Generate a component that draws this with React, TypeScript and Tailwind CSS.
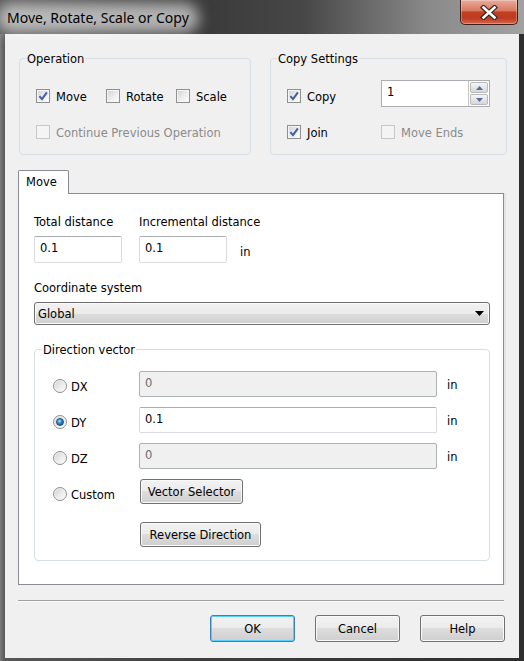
import type { ReactNode } from 'react';

function CheckBox({ checked = false, disabled = false }: { checked?: boolean; disabled?: boolean }) {
  return (
    <span
      className={
        disabled
          ? 'flex h-[14px] w-[14px] shrink-0 border border-[#c8c8c8] bg-[#f4f4f4]'
          : 'flex h-[14px] w-[14px] shrink-0 items-center justify-center border border-[#8f8f8f] bg-[linear-gradient(135deg,#cdd0d4_0%,#eeeeee_55%,#ffffff_100%)] shadow-[inset_0_0_0_1px_#f6f6f6]'
      }
    >
      {checked && (
        <svg width="10" height="10" viewBox="0 0 10 10">
          <path d="M1.4 5.2 L4 8.2 L8.9 1.4" fill="none" stroke="#4460a4" strokeWidth="2" />
        </svg>
      )}
    </span>
  );
}

function CheckItem({
  label,
  checked,
  disabled,
  className = '',
}: {
  label: string;
  checked?: boolean;
  disabled?: boolean;
  className?: string;
}) {
  return (
    <div className={`flex h-[14px] items-center ${className}`}>
      <CheckBox checked={checked} disabled={disabled} />
      <span className={disabled ? 'ml-[6px] mt-[1px] text-[#8b8b8b]' : 'ml-[6px] mt-[1px]'}>{label}</span>
    </div>
  );
}

function Radio({ checked = false }: { checked?: boolean }) {
  return (
    <span className="flex h-[14px] w-[14px] shrink-0 items-center justify-center rounded-full border border-[#8f8f8f] bg-[linear-gradient(135deg,#cfcfcf_0%,#ececec_55%,#ffffff_100%)] shadow-[inset_0_0_0_1px_#f4f4f4]">
      {checked && (
        <span className="h-[8px] w-[8px] rounded-full border border-[#1d4f7c] bg-[radial-gradient(circle_at_40%_35%,#a9e4ff_0%,#2f8fd6_40%,#0b3a68_100%)]" />
      )}
    </span>
  );
}

function GroupBox({
  title,
  className,
  legendBg,
  legendLeft,
  children,
}: {
  title: string;
  className: string;
  legendBg: string;
  legendLeft: string;
  children: ReactNode;
}) {
  return (
    <div className={`relative rounded-[4px] border border-[#d5dfe5] ${className}`}>
      <span className={`absolute top-[-7px] px-[1px] ${legendLeft} ${legendBg}`}>{title}</span>
      {children}
    </div>
  );
}

function TextBox({
  value,
  className,
  disabled = false,
}: {
  value: string;
  className: string;
  disabled?: boolean;
}) {
  return (
    <div
      className={`rounded-[2px] border pl-[5px] pt-[4px] ${className} ${
        disabled ? 'border-[#adb2b5] bg-[#f0f0f0] text-[#6d6d6d]' : 'border-[#d8dbe0] border-t-[#abadb3] bg-white'
      }`}
    >
      {value}
    </div>
  );
}

function Btn({ children, className, def = false }: { children: ReactNode; className: string; def?: boolean }) {
  return (
    <div
      className={`flex items-center justify-center rounded-[3px] border bg-[linear-gradient(180deg,#f2f2f2_0%,#ebebeb_50%,#dddddd_50%,#cfcfcf_100%)] pt-[1px] ${className} ${
        def ? 'border-[#3c7fb1] shadow-[inset_0_0_0_1px_#58d0fb]' : 'border-[#707070] shadow-[inset_0_0_0_1px_#fafafa]'
      }`}
    >
      {children}
    </div>
  );
}

function VecRow({ label, value, checked, disabled }: { label: string; value: string; checked?: boolean; disabled?: boolean }) {
  return (
    <div className="flex items-center">
      <div className="mt-[8px] flex h-[14px] w-[86px] items-center self-start">
        <Radio checked={checked} />
        <span className="ml-[4px] mt-[1px]">{label}</span>
      </div>
      <TextBox value={value} disabled={disabled} className="h-[26px] w-[298px]" />
      <span className="ml-[10px] mt-[1px]">in</span>
    </div>
  );
}

export default function App() {
  return (
    <div className="flex h-[661px] w-[524px] flex-col bg-[linear-gradient(90deg,#7a7a7a_0px,#575757_5px,#3e3e3e_40%,#2e2e2e_100%)] font-['DejaVu_Sans',sans-serif] text-[11.5px] leading-[14px] text-black">
      {/* title bar */}
      <div className="flex h-[34px] shrink-0 items-start justify-between bg-[linear-gradient(90deg,#585858_0%,#3b3b3b_40%,#474747_58%,#8a8a8a_82%,#a2a2a2_100%)]">
        <div className="relative ml-[7px] mt-[8px]">
          <span className="absolute -inset-x-[10px] -inset-y-[5px] rounded-full bg-white/60 blur-[7px]" />
          <span className="relative font-['Noto_Sans',sans-serif] text-[14px] leading-[20px]">Move, Rotate, Scale or Copy</span>
        </div>
        <div className="mr-[6px] flex h-[25px] w-[58px] items-center justify-center rounded-b-[5px] border border-t-0 border-[#3f1e18] bg-[linear-gradient(180deg,#e8ab9c_0%,#d9785f_45%,#c3401f_50%,#bd3a1f_75%,#d6674b_100%)] shadow-[inset_0_0_0_1px_rgba(255,255,255,0.3)]">
          <svg width="18" height="15" viewBox="0 0 18 15">
            <path d="M3.5 2.5 L14.5 12.5 M14.5 2.5 L3.5 12.5" stroke="#3b2622" strokeWidth="5" strokeLinecap="square" />
            <path d="M3.5 2.5 L14.5 12.5 M14.5 2.5 L3.5 12.5" stroke="#ffffff" strokeWidth="2.6" strokeLinecap="square" />
          </svg>
        </div>
      </div>

      {/* client */}
      <div className="mx-[5px] mb-[3px] flex flex-1 flex-col bg-[#f0f0f0] pt-[24px]">
        <div className="flex gap-[19px] pl-[14px]">
          <GroupBox title="Operation" className="h-[97px] w-[232px]" legendBg="bg-[#f0f0f0]" legendLeft="left-[6px]">
            <div className="flex flex-col pl-[16px] pt-[30px]">
              <div className="flex">
                <CheckItem label="Move" checked className="w-[70px]" />
                <CheckItem label="Rotate" className="w-[70px]" />
                <CheckItem label="Scale" />
              </div>
              <div className="mt-[22px] flex">
                <CheckItem label="Continue Previous Operation" disabled />
              </div>
            </div>
          </GroupBox>

          <GroupBox title="Copy Settings" className="h-[97px] w-[237px]" legendBg="bg-[#f0f0f0]" legendLeft="left-[6px]">
            <div className="flex flex-col pl-[16px] pt-[21px]">
              <div className="flex items-start">
                <CheckItem label="Copy" checked className="mt-[9px] w-[94px]" />
                <div className="flex h-[27px] w-[109px] border border-[#abadb3] bg-white">
                  <span className="pl-[5px] pt-[4px]">1</span>
                  <div className="ml-auto flex w-[21px] flex-col gap-[1px] border-l border-[#c4c4c4] p-[1px]">
                    <div className="flex flex-1 items-center justify-center rounded-[2px] border border-[#b9b9b9] bg-[linear-gradient(180deg,#f6f6f6_0%,#e6e6e6_50%,#d6d6d6_100%)]">
                      <svg width="7" height="4" viewBox="0 0 7 4">
                        <path d="M0 4 L3.5 0 L7 4 Z" fill="#4d6eab" />
                      </svg>
                    </div>
                    <div className="flex flex-1 items-center justify-center rounded-[2px] border border-[#b9b9b9] bg-[linear-gradient(180deg,#f6f6f6_0%,#e6e6e6_50%,#d6d6d6_100%)]">
                      <svg width="7" height="4" viewBox="0 0 7 4">
                        <path d="M0 0 L7 0 L3.5 4 Z" fill="#4d6eab" />
                      </svg>
                    </div>
                  </div>
                </div>
              </div>
              <div className="mt-[18px] flex">
                <CheckItem label="Join" checked className="w-[94px]" />
                <CheckItem label="Move Ends" disabled />
              </div>
            </div>
          </GroupBox>
        </div>

        {/* tab */}
        <div className="ml-[13px] mt-[15px] flex flex-col">
          <div className="relative z-10 -mb-[1px] h-[24px] w-[51px] rounded-t-[2px] border-x border-t border-[#898c95] bg-white pl-[7px] pt-[4px]">
            Move
          </div>
          <div className="h-[392px] w-[486px] border border-[#898c95] bg-white pl-[15px] pt-[21px] shadow-[2px_0_0_0_#e4e4e4]">
            <div className="flex">
              <span className="w-[105px]">Total distance</span>
              <span>Incremental distance</span>
            </div>
            <div className="mt-[7px] flex items-center">
              <TextBox value="0.1" className="mr-[17px] h-[27px] w-[88px]" />
              <TextBox value="0.1" className="h-[27px] w-[88px]" />
              <span className="ml-[13px] mt-[4px]">in</span>
            </div>

            <div className="mt-[18px]">Coordinate system</div>
            <div className="mt-[7px] flex h-[23px] w-[456px] items-center justify-between rounded-[3px] border border-[#707070] bg-[linear-gradient(180deg,#f2f2f2_0%,#ebebeb_50%,#dddddd_50%,#cfcfcf_100%)] pl-[3px] pr-[5px] shadow-[inset_0_0_0_1px_#fafafa]">
              <span className="mt-[1px]">Global</span>
              <svg width="9" height="5" viewBox="0 0 9 5">
                <path d="M0 0 L9 0 L4.5 5 Z" fill="#000" />
              </svg>
            </div>

            <GroupBox title="Direction vector" className="mt-[24px] h-[212px] w-[456px]" legendBg="bg-white" legendLeft="left-[7px]">
              <div className="flex flex-col gap-[10px] pl-[18px] pt-[21px]">
                <VecRow label="DX" value="0" disabled />
                <VecRow label="DY" value="0.1" checked />
                <VecRow label="DZ" value="0" disabled />
                <div className="flex items-start">
                  <div className="mt-[8px] flex h-[14px] w-[86px] items-center">
                    <Radio />
                    <span className="ml-[4px] mt-[1px]">Custom</span>
                  </div>
                  <Btn className="ml-[1px] h-[25px] w-[103px]">Vector Selector</Btn>
                </div>
                <Btn className="ml-[87px] mt-[8px] h-[25px] w-[121px]">Reverse Direction</Btn>
              </div>
            </GroupBox>
          </div>
        </div>

        <div className="ml-[13px] mt-[15px] h-[2px] w-[486px] border-t border-b border-t-[#a0a0a0] border-b-[#fbfbfb]" />

        <div className="mt-[13px] flex justify-end gap-[20px] pr-[14px]">
          <Btn def className="h-[27px] w-[85px]">OK</Btn>
          <Btn className="h-[27px] w-[85px]">Cancel</Btn>
          <Btn className="h-[27px] w-[85px]">Help</Btn>
        </div>
      </div>
    </div>
  );
}
